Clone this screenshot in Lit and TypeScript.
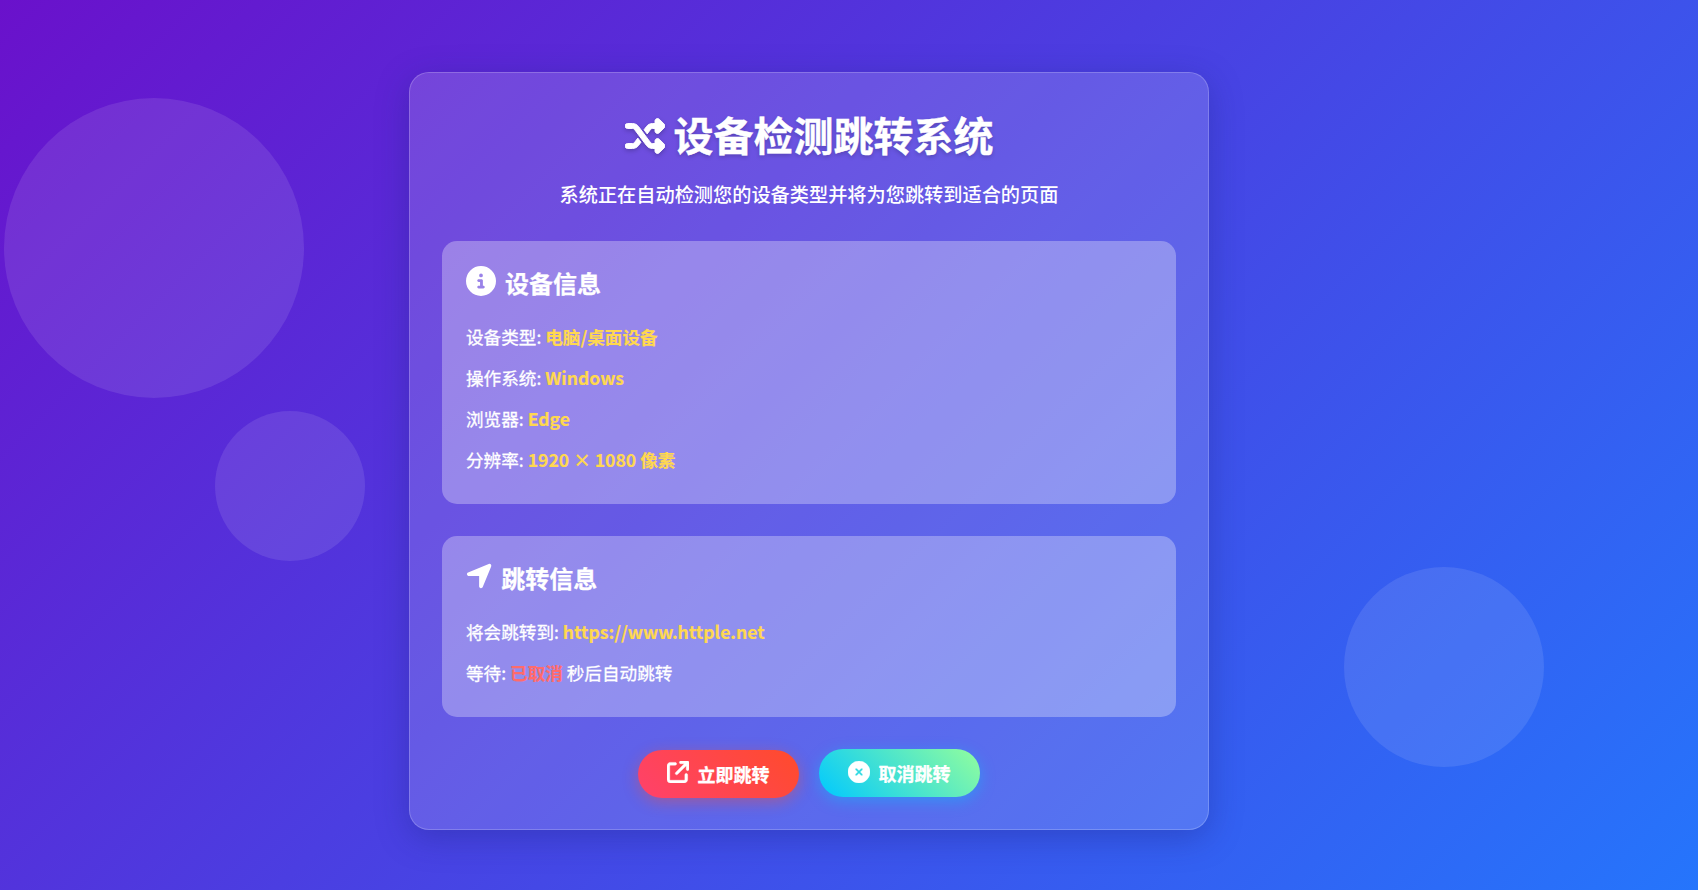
import { LitElement, html, css, svg } from "lit";
import { customElement } from "lit/decorators.js";

const icon = (vb: string, d: string, cls: string) =>
  html`<svg class=${cls} viewBox=${vb} aria-hidden="true">${svg`<path fill="currentColor" d=${d}></path>`}</svg>`;

const SHUFFLE = "M403.8 34.4c12-5 25.7-2.2 34.9 6.9l64 64c6 6 9.4 14.1 9.4 22.6s-3.4 16.6-9.4 22.6l-64 64c-9.2 9.2-22.9 11.9-34.9 6.9s-19.8-16.6-19.8-29.6V160H352c-10.1 0-19.6 4.7-25.6 12.8L284 229.3 244 176l31.2-41.6C293.3 110.2 321.8 96 352 96h32V64c0-12.9 7.8-24.6 19.8-29.6zM164 282.7L204 336l-31.2 41.6C154.7 401.8 126.2 416 96 416H32c-17.7 0-32-14.3-32-32s14.3-32 32-32H96c10.1 0 19.6-4.7 25.6-12.8L164 282.7zm274.6 188c-9.2 9.2-22.9 11.9-34.9 6.9s-19.8-16.6-19.8-29.6V416H352c-30.2 0-58.7-14.2-76.8-38.4L121.6 172.8c-6-8.1-15.5-12.8-25.6-12.8H32c-17.7 0-32-14.3-32-32s14.3-32 32-32H96c30.2 0 58.7 14.2 76.8 38.4L326.4 339.2c6 8.1 15.5 12.8 25.6 12.8h32V320c0-12.9 7.8-24.6 19.8-29.6s25.7-2.2 34.9 6.9l64 64c6 6 9.4 14.1 9.4 22.6s-3.4 16.6-9.4 22.6l-64 64z";
const INFO = "M256 512A256 256 0 1 0 256 0a256 256 0 1 0 0 512zM216 336h24V272H216c-13.3 0-24-10.7-24-24s10.7-24 24-24h48c13.3 0 24 10.7 24 24v88h8c13.3 0 24 10.7 24 24s-10.7 24-24 24H216c-13.3 0-24-10.7-24-24s10.7-24 24-24zm40-208a32 32 0 1 1 0 64 32 32 0 1 1 0-64z";
const ARROW = "M429.6 92.1c4.9-11.9 2.1-25.6-7-34.7s-22.8-11.9-34.7-7l-352 144c-14.2 5.8-22.2 20.8-19.3 35.8s16.1 25.8 31.4 25.8H224V432c0 15.3 10.8 28.4 25.8 31.4s30.9-5.1 35.8-19.3l144-352z";
const EXT = "M320 0c-17.7 0-32 14.3-32 32s14.3 32 32 32h82.7L201.4 265.4c-12.5 12.5-12.5 32.8 0 45.3s32.8 12.5 45.3 0L448 109.3V192c0 17.7 14.3 32 32 32s32-14.3 32-32V32c0-17.7-14.3-32-32-32H320zM80 32C35.8 32 0 67.8 0 112V432c0 44.2 35.8 80 80 80H400c44.2 0 80-35.8 80-80V320c0-17.7-14.3-32-32-32s-32 14.3-32 32V432c0 8.8-7.2 16-16 16H80c-8.8 0-16-7.2-16-16V112c0-8.8 7.2-16 16-16H192c17.7 0 32-14.3 32-32s-14.3-32-32-32H80z";
const XMARK = "M256 512A256 256 0 1 0 256 0a256 256 0 1 0 0 512zM175 175c9.4-9.4 24.6-9.4 33.9 0l47 47 47-47c9.4-9.4 24.6-9.4 33.9 0s9.4 24.6 0 33.9l-47 47 47 47c9.4 9.4 9.4 24.6 0 33.9s-24.6 9.4-33.9 0l-47-47-47 47c-9.4 9.4-24.6 9.4-33.9 0s-9.4-24.6 0-33.9l47-47-47-47c-9.4-9.4-9.4-24.6 0-33.9z";

@customElement("app-root")
export class AppRoot extends LitElement {
  static styles = css`
    :host {
      display: block;
      font-family: "Noto Sans CJK SC", "Noto Sans", sans-serif;
      color: #fff;
    }
    * { box-sizing: border-box; }
    .page {
      position: relative;
      height: 890px;
      overflow: hidden;
      background: linear-gradient(135deg, #6a11cb 0%, #2575fc 100%);
      padding: 72px 0 0 409px;
    }
    .circle {
      position: absolute;
      border-radius: 50%;
      background: rgba(255, 255, 255, 0.1);
    }
    .c1 { left: 4px; top: 98px; width: 300px; height: 300px; }
    .c2 { left: 215px; top: 411px; width: 150px; height: 150px; }
    .c3 { left: 1344px; top: 567px; width: 200px; height: 200px; }
    .card {
      position: relative;
      width: 800px;
      padding: 32px 32px 31px;
      border: 1px solid rgba(255, 255, 255, 0.2);
      border-radius: 20px;
      background: rgba(255, 255, 255, 0.15);
      box-shadow: 0 8px 32px rgba(31, 38, 135, 0.37);
    }
    h1 {
      margin: -3px 0 13px;
      font-size: 40px;
      line-height: 64px;
      font-weight: 700;
      text-align: center;
      text-shadow: 0 2px 4px rgba(0, 0, 0, 0.2);
      -webkit-text-stroke: 0.4px #fff;
    }
    .title-icon {
      width: 40px;
      height: 40px;
      vertical-align: -5px;
      margin-right: 9px;
      filter: drop-shadow(0 2px 2px rgba(0, 0, 0, 0.2));
    }
    .title-icon path { stroke: currentColor; stroke-width: 12px; }
    .sub {
      margin: 0 0 32px;
      font-size: 19.2px;
      line-height: 30px;
      text-align: center;
      font-weight: 500;
    }
    .box {
      padding: 24px 24px 30px;
      margin-bottom: 32px;
      border-radius: 15px;
      background: rgba(255, 255, 255, 0.3);
    }
    h2 {
      display: flex;
      align-items: center;
      gap: 9px;
      margin: -1px 0 21px;
      font-size: 24px;
      line-height: 38px;
      font-weight: 700;
      -webkit-text-stroke: 0.25px #fff;
    }
    .h-icon { width: 30px; height: 30px; flex: none; margin-top: -4px; }
    .h-icon.arrow { width: 26.25px; }
    .row {
      margin: 0 0 13px;
      font-size: 17.6px;
      line-height: 28px;
      font-weight: 400;
      -webkit-text-stroke: 0.3px #fff;
    }
    .row:last-child { margin-bottom: 0; }
    .v { color: #ffd84f; font-weight: 700; -webkit-text-stroke: 0.2px #ffd84f; }
    .r { color: #ff6b6b; font-weight: 700; -webkit-text-stroke: 0.2px #ff6b6b; }
    .actions {
      display: flex;
      justify-content: center;
      align-items: flex-start;
      gap: 20px;
      margin-top: 33px;
    }
    .box:last-of-type { margin-bottom: 0; }
    .btn {
      display: flex;
      align-items: center;
      justify-content: center;
      gap: 9px;
      width: 161px;
      height: 48px;
      border: 0;
      padding: 0 1px 0 0;
      border-radius: 50px;
      font: inherit;
      font-size: 18px;
      font-weight: 700;
      color: #fff;
      -webkit-text-stroke: 0.3px #fff;
    }
    .btn svg { width: 22px; height: 22px; flex: none; margin-top: -4px; }
    .btn svg path { stroke: currentColor; stroke-width: 10px; }
    .go {
      background: linear-gradient(45deg, #ff416c, #ff4b2b);
      box-shadow: 0 4px 15px rgba(255, 75, 43, 0.4);
    }
    .no {
      margin-top: -1px;
      background: linear-gradient(45deg, #00c9ff, #92fe9d);
      box-shadow: 0 4px 15px rgba(0, 201, 255, 0.4);
    }
    .no svg { margin-top: -3px; }
  `;

  render() {
    return html`<div class="page">
      <div class="circle c1"></div>
      <div class="circle c2"></div>
      <div class="circle c3"></div>
      <main class="card">
        <h1>${icon("0 0 512 512", SHUFFLE, "title-icon")}设备检测跳转系统</h1>
        <p class="sub">系统正在自动检测您的设备类型并将为您跳转到适合的页面</p>
        <section class="box">
          <h2>${icon("0 0 512 512", INFO, "h-icon")}设备信息</h2>
          <p class="row">设备类型: <span class="v">电脑/桌面设备</span></p>
          <p class="row">操作系统: <span class="v">Windows</span></p>
          <p class="row">浏览器: <span class="v">Edge</span></p>
          <p class="row">分辨率: <span class="v">1920 × 1080 像素</span></p>
        </section>
        <section class="box">
          <h2>${icon("0 0 448 512", ARROW, "h-icon arrow")}跳转信息</h2>
          <p class="row">将会跳转到: <span class="v">https://www.httple.net</span></p>
          <p class="row">等待: <span class="r">已取消</span> 秒后自动跳转</p>
        </section>
        <div class="actions">
          <button class="btn go">${icon("0 0 512 512", EXT, "")}立即跳转</button>
          <button class="btn no">${icon("0 0 512 512", XMARK, "")}取消跳转</button>
        </div>
      </main>
    </div>`;
  }
}
